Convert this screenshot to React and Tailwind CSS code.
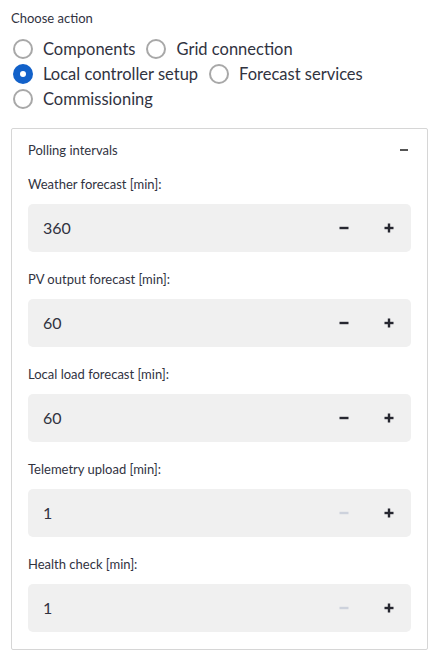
const options = [
  { label: 'Components', checked: false },
  { label: 'Grid connection', checked: false },
  { label: 'Local controller setup', checked: true },
  { label: 'Forecast services', checked: false },
  { label: 'Commissioning', checked: false },
];

const fields = [
  { label: 'Weather forecast [min]:', value: '360', canDec: true },
  { label: 'PV output forecast [min]:', value: '60', canDec: true },
  { label: 'Local load forecast [min]:', value: '60', canDec: true },
  { label: 'Telemetry upload [min]:', value: '1', canDec: false },
  { label: 'Health check [min]:', value: '1', canDec: false },
];

function Radio({ checked }) {
  if (checked) {
    return (
      <span className="w-5 h-5 rounded-full bg-[#1261c9] flex items-center justify-center shrink-0">
        <span className="w-[6px] h-[6px] rounded-full bg-white" />
      </span>
    );
  }
  return <span className="w-5 h-5 rounded-full border-2 border-[#a8a8a8] shrink-0" />;
}

function MinusIcon({ color }) {
  return (
    <svg width="10" height="10" viewBox="0 0 10 10">
      <rect x="0.5" y="3.8" width="9" height="2.4" fill={color} />
    </svg>
  );
}

function PlusIcon() {
  return (
    <svg width="10" height="10" viewBox="0 0 10 10">
      <rect x="0.5" y="3.8" width="9" height="2.4" fill="#262730" />
      <rect x="3.8" y="0.5" width="2.4" height="9" fill="#262730" />
    </svg>
  );
}

function NumberField({ label, value, canDec }) {
  return (
    <div className="flex flex-col">
      <div className="h-5 leading-5 text-[13px] text-[#31333f]">{label}</div>
      <div className="mt-[10px] h-12 bg-[#f0f0f0] rounded-[5px] flex items-center">
        <span className="flex-1 pl-[15px] text-[16px] text-[#31333f]">{value}</span>
        <button className="w-[45px] h-full flex items-center justify-center">
          <MinusIcon color={canDec ? '#262730' : '#cdd2dc'} />
        </button>
        <button className="w-[45px] h-full flex items-center justify-center">
          <PlusIcon />
        </button>
      </div>
    </div>
  );
}

export default function App() {
  return (
    <div
      className="bg-white min-h-screen px-[11px] pt-2 text-[#31333f]"
      style={{ fontFamily: 'Lato, "Noto Sans", sans-serif' }}
    >
      <div className="h-5 leading-5 text-[13px]">Choose action</div>

      <div className="mt-[9px] flex flex-wrap gap-y-px gap-x-[11px] pl-[2px] w-[420px]">
        {options.map((o) => (
          <label key={o.label} className="h-6 flex items-center gap-[10px]">
            <Radio checked={o.checked} />
            <span className="text-[16.5px] leading-6">{o.label}</span>
          </label>
        ))}
      </div>

      <div className="mt-[17px] w-[417px] border border-[#d6d6d6] rounded-[2px] px-4 pb-[17px]">
        <div className="pt-[11px] h-[31px] flex items-center justify-between">
          <span className="text-[13px] leading-5">Polling intervals</span>
          <span className="w-2 h-[2px] bg-[#555555] mr-[3px]" />
        </div>
        <div className="mt-[14px] flex flex-col gap-[17px]">
          {fields.map((f) => (
            <NumberField key={f.label} {...f} />
          ))}
        </div>
      </div>
    </div>
  );
}
